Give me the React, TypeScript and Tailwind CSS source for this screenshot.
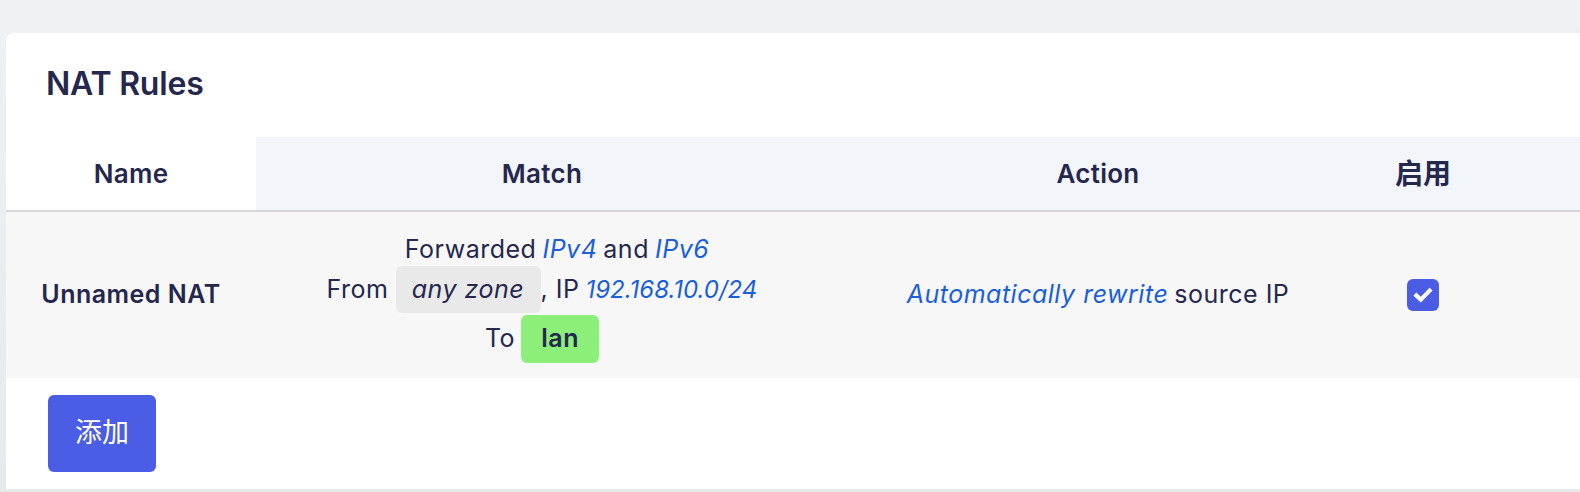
import React from 'react'

const font = { fontFamily: 'Inter, "Noto Sans CJK SC", sans-serif' }

function Check() {
  return (
    <span className="flex h-[32px] w-[32px] items-center justify-center rounded-[6px] bg-[#4b5de4]">
      <svg viewBox="0 0 20 20" className="h-[22px] w-[22px]">
        <path d="M4 10.5 L8 14.2 L16 6" fill="none" stroke="#fff" strokeWidth="3.8" strokeLinecap="square" />
      </svg>
    </span>
  )
}

export default function App() {
  return (
    <div className="h-[492px] w-[1580px] overflow-hidden bg-gradient-to-b from-[#f0f1f3] to-[#e8e9ec] pl-[6px] pt-[33px] text-[#25274d]" style={font}>
      <div className="h-[456px] w-full rounded-tl-[8px] bg-white">
        <div className="flex h-[104px] items-center pl-[40px] pb-[2px]">
          <h1 className="text-[32px] font-semibold tracking-[-0.2px]">NAT Rules</h1>
        </div>

        {/* header */}
        <div className="grid h-[75px] grid-cols-[250px_572px_540px_110px_1fr] border-b-2 border-[#d6d6d6] text-[26px] font-semibold tracking-[0.3px]">
          <div className="flex items-center justify-center bg-white">Name</div>
          <div className="flex items-center justify-center bg-[#f2f5f9]">Match</div>
          <div className="flex items-center justify-center bg-[#f2f5f9]">Action</div>
          <div className="flex items-center justify-center bg-[#f2f5f9] text-[28px] tracking-normal">启用</div>
          <div className="bg-[#f2f5f9]" />
        </div>

        {/* row */}
        <div className="grid h-[166px] grid-cols-[250px_572px_540px_110px_1fr] bg-[#f7f7f7] text-[25px] tracking-[0.5px]">
          <div className="flex items-center justify-center font-semibold">Unnamed NAT</div>
          <div className="flex flex-col items-center pt-[22px]">
            <div className="flex h-[32px] items-center gap-[6px] pl-[30px]">
              Forwarded <i className="text-[#1a5fd8]">IPv4</i> and <i className="text-[#1a5fd8]">IPv6</i>
            </div>
            <div className="flex h-[47px] items-center">
              <span>From</span>
              <span className="ml-[7px] flex h-[47px] w-[145px] items-center justify-center rounded-[6px] bg-[#e9e9e9] italic">any zone</span>
              <span>, IP</span>
              <i className="ml-[6px] text-[24px] tracking-normal text-[#1a5fd8]">192.168.10.0/24</i>
            </div>
            <div className="mt-[2px] flex h-[48px] items-center">
              <span>To</span>
              <span className="ml-[6px] flex h-[48px] w-[78px] items-center justify-center rounded-[6px] bg-[#8bef79] font-semibold">lan</span>
            </div>
          </div>
          <div className="flex items-center justify-center gap-[6px]">
            <i className="text-[#1a5fd8]">Automatically rewrite</i> source IP
          </div>
          <div className="flex items-center justify-center">
            <Check />
          </div>
          <div />
        </div>

        <div className="pl-[42px] pt-[17px]">
          <button className="flex h-[77px] w-[108px] items-center justify-center rounded-[6px] bg-[#4b5de4] text-[27px] text-white">
            添加
          </button>
        </div>
      </div>
    </div>
  )
}
